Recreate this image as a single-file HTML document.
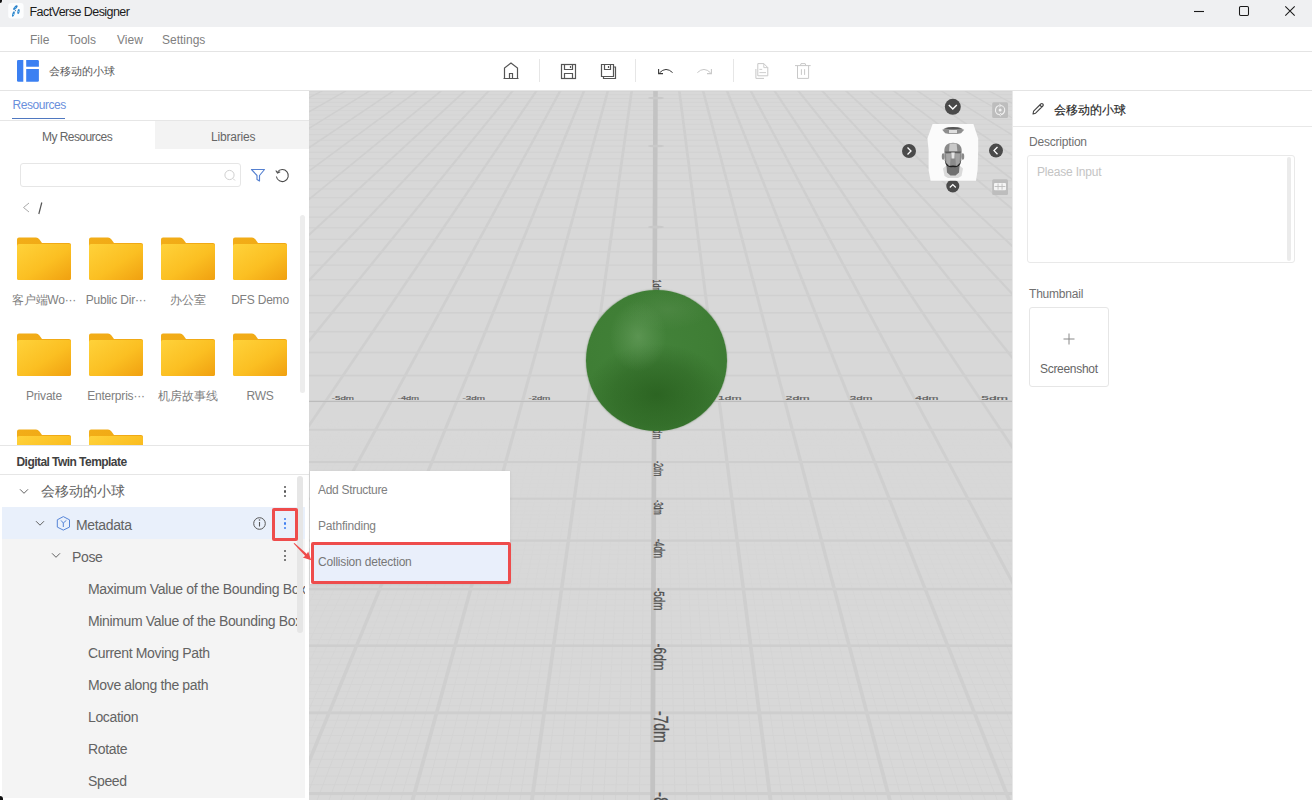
<!DOCTYPE html>
<html><head><meta charset="utf-8">
<style>
*{box-sizing:border-box;margin:0;padding:0}
html,body{width:1312px;height:800px;overflow:hidden;background:#fff;font-family:"Liberation Sans",sans-serif;color:#555}
.a{position:absolute}
.t{position:absolute;white-space:nowrap;line-height:1}
svg{display:block}
#titlebar{left:0;top:0;width:1312px;height:27px;background:#eff0f2}
#menubar{left:0;top:27px;width:1312px;height:25px;background:#fff;border-bottom:1px solid #e4e4e4}
#toolbar{left:0;top:52px;width:1312px;height:39px;background:#fff;border-bottom:1px solid #e4e4e4}

#view{left:309px;top:91px;width:703px;height:709px;background:#d8d8d8;overflow:hidden}
#right{left:1012px;top:91px;width:300px;height:709px;background:#fff;border-left:1px solid #e8e8e8}
.menu{font-size:12px;color:#808080;top:7px}
.sep{position:absolute;top:7px;width:1px;height:23px;background:#e6e6e6}
.folder{position:absolute;width:55px;height:44px}
.flabel{position:absolute;width:72px;text-align:center;font-size:12px;color:#808080;letter-spacing:-0.2px;line-height:1;white-space:nowrap}
.tree{position:absolute;font-size:14px;color:#636363;line-height:1;white-space:nowrap;letter-spacing:-0.35px;margin-top:0.5px}
.kebab{position:absolute;width:3px;height:13px}
.kebab i{position:absolute;left:0;width:2.2px;height:2.2px;border-radius:50%;background:#555}
</style></head><body>

<!-- TITLE BAR -->
<div id="titlebar" class="a">
  <svg class="a" style="left:8px;top:3px" width="16" height="16" viewBox="0 0 16 16">
    <rect x="0.2" y="0" width="15.4" height="15.6" rx="3" fill="#fcfdfe"/>
    <ellipse cx="7.4" cy="4.6" rx="1.3" ry="2.9" fill="#2a7fc8" transform="rotate(45 7.4 4.6)"/><circle cx="7.2" cy="4.8" r="0.7" fill="#6cc4f4"/>
    <ellipse cx="10.5" cy="8.5" rx="1.15" ry="2.5" fill="#2f86cc" transform="rotate(12 10.5 8.5)"/><circle cx="10.5" cy="8.6" r="0.6" fill="#7fd0f8"/>
    <ellipse cx="5.4" cy="11" rx="1.15" ry="2.8" fill="#2f86cc" transform="rotate(18 5.4 11)"/><circle cx="5.5" cy="11.4" r="0.6" fill="#7fd0f8"/>
    <circle cx="7.4" cy="7.6" r="0.6" fill="#3a6a9a"/>
  </svg>
  <div class="a" style="left:0;top:0;width:2px;height:3px;background:#111;border-radius:0 0 2px 0"></div>
  <div class="t" style="left:29.5px;top:6px;font-size:12.5px;color:#1b1b1b;letter-spacing:-0.55px">FactVerse Designer</div>
  <svg class="a" style="left:1190px;top:4px" width="110" height="16" viewBox="0 0 110 16">
    <line x1="4" y1="7.5" x2="14" y2="7.5" stroke="#1a1a1a" stroke-width="1.1"/>
    <rect x="49.5" y="2.5" width="9" height="9" rx="1.2" fill="none" stroke="#1a1a1a" stroke-width="1.05"/>
    <path d="M95.3 2.3 L104.7 11.7 M104.7 2.3 L95.3 11.7" stroke="#1a1a1a" stroke-width="1.05"/>
  </svg>
</div>

<!-- MENU BAR -->
<div id="menubar" class="a">
  <div class="t menu" style="left:30px">File</div>
  <div class="t menu" style="left:68px">Tools</div>
  <div class="t menu" style="left:117px">View</div>
  <div class="t menu" style="left:162px">Settings</div>
</div>

<!-- TOOLBAR -->
<div id="toolbar" class="a">
  <svg class="a" style="left:17px;top:8px" width="22" height="22" viewBox="0 0 22 22">
    <path d="M0 1.3 Q0 0 1.3 0 H6.3 V21.7 H1.3 Q0 21.7 0 20.4 Z" fill="#3b80f2"/>
    <path d="M9.2 0 H20.6 Q21.9 0 21.9 1.3 V6.8 H9.2 Z" fill="#3b80f2"/>
    <path d="M9.2 9 H21.9 V20.4 Q21.9 21.7 20.6 21.7 H9.2 Z" fill="#3b80f2"/>
  </svg>
  <div class="t" style="left:48.5px;top:14px;font-size:11.4px;color:#555">会移动的小球</div>

  <svg class="a" style="left:500px;top:8px" width="320" height="24" viewBox="500 60 320 24">
    <g fill="none" stroke="#555" stroke-width="1.2">
      <!-- home -->
      <path d="M503.5 78.5 H518.5 M504.5 78.5 V68 L511 63 L517.5 68 V78.5 M509.5 78.5 V73.5 H512.5 V78.5"/>
      <!-- save -->
      <rect x="561.5" y="64.5" width="14" height="14"/>
      <path d="M564.5 64.5 V69.5 H572.5 V64.5 M564.5 78.5 V73.5 H572.5 V78.5"/>
      <line x1="570.5" y1="66" x2="570.5" y2="68"/>
      <!-- save all -->
      <path d="M601.5 64.5 H613.5 V76.5 H601.5 Z"/>
      <path d="M613.5 67 H615.5 V78.5 H603.5 V76.5"/>
      <path d="M604.5 64.5 V69.5 H610.5 V64.5"/>
      <line x1="608.5" y1="66" x2="608.5" y2="68"/>
      <!-- undo -->
      <path d="M659.5 72.8 Q666 66.2 672.6 72.6" stroke="#3a3a3a" stroke-width="1"/>
      <path d="M658.6 69 V73.6 H663" stroke="#3a3a3a" stroke-width="1.1"/>
    </g>
    <g fill="none" stroke="#c8c8c8" stroke-width="1.2">
      <!-- redo -->
      <path d="M710.6 72.8 Q704 66.2 697.4 72.6" stroke-width="1"/>
      <path d="M711.4 69 V73.6 H707" stroke-width="1.1"/>
      <!-- copy -->
      <path d="M757.8 63.6 H763.8 L767.8 67.6 V75.8 H757.8 Z" stroke-width="1"/>
      <path d="M763.8 63.6 V67.6 H767.8" stroke-width="0.9"/>
      <path d="M755.9 69 V78.4 H764" stroke-width="1"/>
      <path d="M759.4 69.4 H762.2 M759.4 72.6 H766" stroke-width="0.9"/>
      <!-- delete -->
      <path d="M795 65.6 H810.7 M800.4 65.6 L801 63.6 H805.2 L805.8 65.6 M797.5 65.6 V78.4 H808.6 V65.6 M801.4 69.2 V74.9 M804.6 69.2 V74.9" stroke-width="1"/>
    </g>
  </svg>
  <div class="sep" style="left:539px"></div>
  <div class="sep" style="left:635px"></div>
  <div class="sep" style="left:733px"></div>
</div>

<!-- LEFT PANEL -->
<div id="leftbg" class="a" style="left:0;top:91px;width:309px;height:709px;background:#fff"></div>
<div id="left" class="a" style="left:0;top:0;width:309px;height:800px;overflow:hidden">
  <div class="t" style="left:12.5px;top:99px;font-size:12px;color:#6a8fdc;letter-spacing:-0.45px">Resources</div>
  <div class="a" style="left:12px;top:117.5px;width:53px;height:1.6px;background:#4f78c0"></div>
  <div class="a" style="left:0;top:120px;width:309px;height:1px;background:#e6e6e6"></div>
  <div class="a" style="left:155px;top:121px;width:154px;height:28px;background:#f3f3f3"></div>
  <div class="t" style="left:42px;top:131px;font-size:12px;color:#666;letter-spacing:-0.55px">My Resources</div>
  <div class="t" style="left:211px;top:131px;font-size:12px;color:#666;letter-spacing:-0.2px">Libraries</div>
  <!-- search -->
  <div class="a" style="left:20px;top:163px;width:221px;height:24px;border:1px solid #e6e6e6;border-radius:3px"></div>
  <svg class="a" style="left:222px;top:168px" width="14" height="14" viewBox="0 0 14 14"><circle cx="7.5" cy="7" r="4.6" fill="none" stroke="#d0d0d0" stroke-width="1"/><line x1="11" y1="10.5" x2="13" y2="12.5" stroke="#d0d0d0"/></svg>
  <svg class="a" style="left:250px;top:168px" width="16" height="14" viewBox="0 0 16 14"><path d="M1.5 1.5 H14.5 L9.5 7.5 V13 L7 11.5 V7.5 Z" fill="none" stroke="#5580d0" stroke-width="1.15" stroke-linejoin="round"/></svg>
  <svg class="a" style="left:274px;top:168px" width="16" height="16" viewBox="0 0 16 16"><path d="M3.5 4 A6 6 0 1 1 2.4 8.5" fill="none" stroke="#4a4a4a" stroke-width="1.05"/><path d="M1.8 2.5 L3.5 5 L6.2 3.8" fill="none" stroke="#4a4a4a" stroke-width="1.05"/></svg>
  <!-- breadcrumb -->
  <svg class="a" style="left:22px;top:202px" width="24" height="14" viewBox="0 0 24 14"><path d="M7 1 L1.5 5.5 L7 10" fill="none" stroke="#aaa" stroke-width="1"/><path d="M19.8 0.5 L16.8 12" stroke="#555" stroke-width="1.2"/></svg>

  <svg width="0" height="0" style="position:absolute"><defs>
<linearGradient id="fg" x1="0" y1="0" x2="1" y2="1"><stop offset="0" stop-color="#ffd23a"/><stop offset="0.55" stop-color="#fbbf22"/><stop offset="1" stop-color="#f0a010"/></linearGradient>
<linearGradient id="ft" x1="0" y1="0" x2="1" y2="0"><stop offset="0" stop-color="#f2ad18"/><stop offset="1" stop-color="#f0a814"/></linearGradient>
</defs></svg>
  <svg class="a" style="left:17px;top:237px" width="54" height="44" viewBox="0 0 54 44"><path d="M0 2.5 Q0 0.5 2 0.5 H19 Q21 0.5 22.5 2.5 L25 6 H52 Q54 6 54 8 V41 Q54 43 52 43 H2 Q0 43 0 41 Z" fill="url(#ft)"/><path d="M0 9 Q0 7 2 7 H52 Q54 7 54 9 V41 Q54 43 52 43 H2 Q0 43 0 41 Z" fill="url(#fg)"/></svg>
  <div class="flabel" style="left:8px;top:294px">客户端Wo···</div>
  <svg class="a" style="left:89px;top:237px" width="54" height="44" viewBox="0 0 54 44"><path d="M0 2.5 Q0 0.5 2 0.5 H19 Q21 0.5 22.5 2.5 L25 6 H52 Q54 6 54 8 V41 Q54 43 52 43 H2 Q0 43 0 41 Z" fill="url(#ft)"/><path d="M0 9 Q0 7 2 7 H52 Q54 7 54 9 V41 Q54 43 52 43 H2 Q0 43 0 41 Z" fill="url(#fg)"/></svg>
  <div class="flabel" style="left:80px;top:294px">Public Dir···</div>
  <svg class="a" style="left:161px;top:237px" width="54" height="44" viewBox="0 0 54 44"><path d="M0 2.5 Q0 0.5 2 0.5 H19 Q21 0.5 22.5 2.5 L25 6 H52 Q54 6 54 8 V41 Q54 43 52 43 H2 Q0 43 0 41 Z" fill="url(#ft)"/><path d="M0 9 Q0 7 2 7 H52 Q54 7 54 9 V41 Q54 43 52 43 H2 Q0 43 0 41 Z" fill="url(#fg)"/></svg>
  <div class="flabel" style="left:152px;top:294px">办公室</div>
  <svg class="a" style="left:233px;top:237px" width="54" height="44" viewBox="0 0 54 44"><path d="M0 2.5 Q0 0.5 2 0.5 H19 Q21 0.5 22.5 2.5 L25 6 H52 Q54 6 54 8 V41 Q54 43 52 43 H2 Q0 43 0 41 Z" fill="url(#ft)"/><path d="M0 9 Q0 7 2 7 H52 Q54 7 54 9 V41 Q54 43 52 43 H2 Q0 43 0 41 Z" fill="url(#fg)"/></svg>
  <div class="flabel" style="left:224px;top:294px">DFS Demo</div>
  <svg class="a" style="left:17px;top:333px" width="54" height="44" viewBox="0 0 54 44"><path d="M0 2.5 Q0 0.5 2 0.5 H19 Q21 0.5 22.5 2.5 L25 6 H52 Q54 6 54 8 V41 Q54 43 52 43 H2 Q0 43 0 41 Z" fill="url(#ft)"/><path d="M0 9 Q0 7 2 7 H52 Q54 7 54 9 V41 Q54 43 52 43 H2 Q0 43 0 41 Z" fill="url(#fg)"/></svg>
  <div class="flabel" style="left:8px;top:390px">Private</div>
  <svg class="a" style="left:89px;top:333px" width="54" height="44" viewBox="0 0 54 44"><path d="M0 2.5 Q0 0.5 2 0.5 H19 Q21 0.5 22.5 2.5 L25 6 H52 Q54 6 54 8 V41 Q54 43 52 43 H2 Q0 43 0 41 Z" fill="url(#ft)"/><path d="M0 9 Q0 7 2 7 H52 Q54 7 54 9 V41 Q54 43 52 43 H2 Q0 43 0 41 Z" fill="url(#fg)"/></svg>
  <div class="flabel" style="left:80px;top:390px">Enterpris···</div>
  <svg class="a" style="left:161px;top:333px" width="54" height="44" viewBox="0 0 54 44"><path d="M0 2.5 Q0 0.5 2 0.5 H19 Q21 0.5 22.5 2.5 L25 6 H52 Q54 6 54 8 V41 Q54 43 52 43 H2 Q0 43 0 41 Z" fill="url(#ft)"/><path d="M0 9 Q0 7 2 7 H52 Q54 7 54 9 V41 Q54 43 52 43 H2 Q0 43 0 41 Z" fill="url(#fg)"/></svg>
  <div class="flabel" style="left:152px;top:390px">机房故事线</div>
  <svg class="a" style="left:233px;top:333px" width="54" height="44" viewBox="0 0 54 44"><path d="M0 2.5 Q0 0.5 2 0.5 H19 Q21 0.5 22.5 2.5 L25 6 H52 Q54 6 54 8 V41 Q54 43 52 43 H2 Q0 43 0 41 Z" fill="url(#ft)"/><path d="M0 9 Q0 7 2 7 H52 Q54 7 54 9 V41 Q54 43 52 43 H2 Q0 43 0 41 Z" fill="url(#fg)"/></svg>
  <div class="flabel" style="left:224px;top:390px">RWS</div>
  <div class="a" style="left:0;top:429px;width:300px;height:16px;overflow:hidden"><svg class="a" style="left:17px;top:0px" width="54" height="44" viewBox="0 0 54 44"><path d="M0 2.5 Q0 0.5 2 0.5 H19 Q21 0.5 22.5 2.5 L25 6 H52 Q54 6 54 8 V41 Q54 43 52 43 H2 Q0 43 0 41 Z" fill="url(#ft)"/><path d="M0 9 Q0 7 2 7 H52 Q54 7 54 9 V41 Q54 43 52 43 H2 Q0 43 0 41 Z" fill="url(#fg)"/></svg><svg class="a" style="left:89px;top:0px" width="54" height="44" viewBox="0 0 54 44"><path d="M0 2.5 Q0 0.5 2 0.5 H19 Q21 0.5 22.5 2.5 L25 6 H52 Q54 6 54 8 V41 Q54 43 52 43 H2 Q0 43 0 41 Z" fill="url(#ft)"/><path d="M0 9 Q0 7 2 7 H52 Q54 7 54 9 V41 Q54 43 52 43 H2 Q0 43 0 41 Z" fill="url(#fg)"/></svg></div>

  <!-- scrollbar -->
  <div class="a" style="left:300px;top:215px;width:5px;height:178px;border-radius:3px;background:#ededed"></div>

  <div class="a" style="left:0;top:445px;width:309px;height:1px;background:#e6e6e6"></div>
  <div class="t" style="left:16.5px;top:456px;font-size:12px;font-weight:bold;color:#404040;letter-spacing:-0.55px">Digital Twin Template</div>
  <div class="a" style="left:0;top:474px;width:309px;height:1px;background:#e6e6e6"></div>

  <!-- tree -->
  <div class="a" style="left:2px;top:507px;width:303px;height:32px;background:#e9f0fb"></div>
  <div class="a" style="left:2px;top:539px;width:303px;height:259px;background:#f4f4f4"></div>
  <svg class="a" style="left:0;top:475px" width="309" height="325" viewBox="0 475 309 325">
    <g fill="none" stroke="#606060" stroke-width="1">
      <path d="M20 489.3 L24 493.3 L28 489.3"/>
      <path d="M36 521.2 L40 525.2 L44 521.2"/>
      <path d="M52 553.3 L56 557.3 L60 553.3"/>
    </g>
    <!-- metadata icon hex -->
    <g>
      <path d="M63.3 516.6 L69.5 519.8 V527.1 L63.3 530.1 L57.3 527.1 V519.8 Z" fill="none" stroke="#5484d8" stroke-width="1"/>
      <path d="M61 520.4 L63.3 523 L66.4 520.3 M63.3 523 V527" fill="none" stroke="#5484d8" stroke-width="1"/>
      <circle cx="259.5" cy="523.5" r="5.8" fill="none" stroke="#555" stroke-width="1"/>
      <line x1="259.5" y1="522" x2="259.5" y2="526.5" stroke="#555" stroke-width="1.1"/>
      <circle cx="259.5" cy="520" r="0.8" fill="#555"/>
    </g>
  </svg>
  <div class="tree" style="left:40.5px;top:484.5px;font-size:13.8px;letter-spacing:0">会移动的小球</div>
  <div class="tree" style="left:76px;top:517px">Metadata</div>
  <div class="tree" style="left:72px;top:549px">Pose</div>
  <div class="tree" style="left:88px;top:581px;width:217px;overflow:hidden;padding-bottom:4px">Maximum Value of the Bounding Box</div>
  <div class="tree" style="left:88px;top:613px;width:217px;overflow:hidden;padding-bottom:4px">Minimum Value of the Bounding Box</div>
  <div class="tree" style="left:88px;top:645px">Current Moving Path</div>
  <div class="tree" style="left:88px;top:677px">Move along the path</div>
  <div class="tree" style="left:88px;top:709px">Location</div>
  <div class="tree" style="left:88px;top:741px">Rotate</div>
  <div class="tree" style="left:88px;top:773px">Speed</div>
  <!-- kebabs -->
  <div class="kebab" style="left:283.5px;top:486.2px"><i style="top:0"></i><i style="top:4.25px"></i><i style="top:8.5px"></i></div>
  <div class="kebab" style="left:283.5px;top:518.1px"><i style="top:0;background:#3d7ef0"></i><i style="top:4.35px;background:#3d7ef0"></i><i style="top:8.7px;background:#3d7ef0"></i></div>
  <div class="kebab" style="left:283.5px;top:550.3px"><i style="top:0"></i><i style="top:4.25px"></i><i style="top:8.5px"></i></div>
  <!-- tree scrollbar -->
    <div class="a" style="left:297.2px;top:475.5px;width:5.6px;height:157px;border-radius:3px;background:#e6e6e6"></div>
  <!-- red box -->
  <div class="a" style="left:272.3px;top:507.5px;width:25.4px;height:33px;border:3.2px solid #ee4c4c;border-radius:2px"></div>
</div>

<!-- VIEWPORT -->
<div id="view" class="a">
  <svg width="703" height="709" style="position:absolute;left:0;top:0"><defs><linearGradient id="sgm" x1="0" y1="0" x2="0" y2="1"><stop offset="0" stop-color="#000"/><stop offset="0.45" stop-color="#000"/><stop offset="1" stop-color="#fff"/></linearGradient><mask id="sgmask"><rect width="703" height="709" fill="url(#sgm)"/></mask></defs><g mask="url(#sgmask)" opacity="0.55"><rect x="0" y="329.36" width="703" height="1" fill="#cfcfcf"/><rect x="0" y="332.31" width="703" height="1" fill="#cfcfcf"/><rect x="0" y="335.29" width="703" height="1" fill="#cfcfcf"/><rect x="0" y="341.37" width="703" height="1" fill="#cfcfcf"/><rect x="0" y="344.46" width="703" height="1" fill="#cfcfcf"/><rect x="0" y="347.59" width="703" height="1" fill="#cfcfcf"/><rect x="0" y="350.75" width="703" height="1" fill="#cfcfcf"/><rect x="0" y="353.96" width="703" height="1" fill="#cfcfcf"/><rect x="0" y="357.20" width="703" height="1" fill="#cfcfcf"/><rect x="0" y="360.49" width="703" height="1" fill="#cfcfcf"/><rect x="0" y="363.81" width="703" height="1" fill="#cfcfcf"/><rect x="0" y="367.18" width="703" height="1" fill="#cfcfcf"/><rect x="0" y="374.04" width="703" height="1" fill="#cfcfcf"/><rect x="0" y="377.54" width="703" height="1" fill="#cfcfcf"/><rect x="0" y="381.08" width="703" height="1" fill="#cfcfcf"/><rect x="0" y="384.67" width="703" height="1" fill="#cfcfcf"/><rect x="0" y="388.31" width="703" height="1" fill="#cfcfcf"/><rect x="0" y="391.99" width="703" height="1" fill="#cfcfcf"/><rect x="0" y="395.72" width="703" height="1" fill="#cfcfcf"/><rect x="0" y="399.50" width="703" height="1" fill="#cfcfcf"/><rect x="0" y="403.33" width="703" height="1" fill="#cfcfcf"/><rect x="0" y="411.15" width="703" height="1" fill="#cfcfcf"/><rect x="0" y="415.14" width="703" height="1" fill="#cfcfcf"/><rect x="0" y="419.19" width="703" height="1" fill="#cfcfcf"/><rect x="0" y="423.29" width="703" height="1" fill="#cfcfcf"/><rect x="0" y="427.45" width="703" height="1" fill="#cfcfcf"/><rect x="0" y="431.66" width="703" height="1" fill="#cfcfcf"/><rect x="0" y="435.94" width="703" height="1" fill="#cfcfcf"/><rect x="0" y="440.28" width="703" height="1" fill="#cfcfcf"/><rect x="0" y="444.68" width="703" height="1" fill="#cfcfcf"/><rect x="0" y="453.67" width="703" height="1" fill="#cfcfcf"/><rect x="0" y="458.26" width="703" height="1" fill="#cfcfcf"/><rect x="0" y="462.92" width="703" height="1" fill="#cfcfcf"/><rect x="0" y="467.65" width="703" height="1" fill="#cfcfcf"/><rect x="0" y="472.45" width="703" height="1" fill="#cfcfcf"/><rect x="0" y="477.33" width="703" height="1" fill="#cfcfcf"/><rect x="0" y="482.28" width="703" height="1" fill="#cfcfcf"/><rect x="0" y="487.30" width="703" height="1" fill="#cfcfcf"/><rect x="0" y="492.41" width="703" height="1" fill="#cfcfcf"/><rect x="0" y="502.85" width="703" height="1" fill="#cfcfcf"/><rect x="0" y="508.20" width="703" height="1" fill="#cfcfcf"/><rect x="0" y="513.63" width="703" height="1" fill="#cfcfcf"/><rect x="0" y="519.15" width="703" height="1" fill="#cfcfcf"/><rect x="0" y="524.76" width="703" height="1" fill="#cfcfcf"/><rect x="0" y="530.46" width="703" height="1" fill="#cfcfcf"/><rect x="0" y="536.25" width="703" height="1" fill="#cfcfcf"/><rect x="0" y="542.14" width="703" height="1" fill="#cfcfcf"/><rect x="0" y="548.13" width="703" height="1" fill="#cfcfcf"/><rect x="0" y="560.41" width="703" height="1" fill="#cfcfcf"/><rect x="0" y="566.71" width="703" height="1" fill="#cfcfcf"/><rect x="0" y="573.12" width="703" height="1" fill="#cfcfcf"/><rect x="0" y="579.64" width="703" height="1" fill="#cfcfcf"/><rect x="0" y="586.28" width="703" height="1" fill="#cfcfcf"/><rect x="0" y="593.04" width="703" height="1" fill="#cfcfcf"/><rect x="0" y="599.91" width="703" height="1" fill="#cfcfcf"/><rect x="0" y="606.91" width="703" height="1" fill="#cfcfcf"/><rect x="0" y="614.04" width="703" height="1" fill="#cfcfcf"/><rect x="0" y="628.70" width="703" height="1" fill="#cfcfcf"/><rect x="0" y="636.23" width="703" height="1" fill="#cfcfcf"/><rect x="0" y="643.91" width="703" height="1" fill="#cfcfcf"/><rect x="0" y="651.73" width="703" height="1" fill="#cfcfcf"/><rect x="0" y="659.71" width="703" height="1" fill="#cfcfcf"/><rect x="0" y="667.84" width="703" height="1" fill="#cfcfcf"/><rect x="0" y="676.13" width="703" height="1" fill="#cfcfcf"/><rect x="0" y="684.58" width="703" height="1" fill="#cfcfcf"/><rect x="0" y="693.21" width="703" height="1" fill="#cfcfcf"/><rect x="0" y="711.00" width="703" height="1" fill="#cfcfcf"/><line x1="-9.79" y1="329" x2="-278.16" y2="709" stroke="#cfcfcf" stroke-width="1"/><line x1="-2.98" y1="329" x2="-266.23" y2="709" stroke="#cfcfcf" stroke-width="1"/><line x1="10.65" y1="329" x2="-242.37" y2="709" stroke="#cfcfcf" stroke-width="1"/><line x1="17.46" y1="329" x2="-230.44" y2="709" stroke="#cfcfcf" stroke-width="1"/><line x1="24.28" y1="329" x2="-218.51" y2="709" stroke="#cfcfcf" stroke-width="1"/><line x1="31.09" y1="329" x2="-206.58" y2="709" stroke="#cfcfcf" stroke-width="1"/><line x1="37.90" y1="329" x2="-194.65" y2="709" stroke="#cfcfcf" stroke-width="1"/><line x1="44.72" y1="329" x2="-182.72" y2="709" stroke="#cfcfcf" stroke-width="1"/><line x1="51.53" y1="329" x2="-170.79" y2="709" stroke="#cfcfcf" stroke-width="1"/><line x1="58.34" y1="329" x2="-158.86" y2="709" stroke="#cfcfcf" stroke-width="1"/><line x1="65.16" y1="329" x2="-146.93" y2="709" stroke="#cfcfcf" stroke-width="1"/><line x1="78.78" y1="329" x2="-123.07" y2="709" stroke="#cfcfcf" stroke-width="1"/><line x1="85.60" y1="329" x2="-111.14" y2="709" stroke="#cfcfcf" stroke-width="1"/><line x1="92.41" y1="329" x2="-99.21" y2="709" stroke="#cfcfcf" stroke-width="1"/><line x1="99.22" y1="329" x2="-87.28" y2="709" stroke="#cfcfcf" stroke-width="1"/><line x1="106.04" y1="329" x2="-75.35" y2="709" stroke="#cfcfcf" stroke-width="1"/><line x1="112.85" y1="329" x2="-63.42" y2="709" stroke="#cfcfcf" stroke-width="1"/><line x1="119.66" y1="329" x2="-51.49" y2="709" stroke="#cfcfcf" stroke-width="1"/><line x1="126.48" y1="329" x2="-39.56" y2="709" stroke="#cfcfcf" stroke-width="1"/><line x1="133.29" y1="329" x2="-27.63" y2="709" stroke="#cfcfcf" stroke-width="1"/><line x1="146.92" y1="329" x2="-3.77" y2="709" stroke="#cfcfcf" stroke-width="1"/><line x1="153.73" y1="329" x2="8.16" y2="709" stroke="#cfcfcf" stroke-width="1"/><line x1="160.54" y1="329" x2="20.09" y2="709" stroke="#cfcfcf" stroke-width="1"/><line x1="167.36" y1="329" x2="32.02" y2="709" stroke="#cfcfcf" stroke-width="1"/><line x1="174.17" y1="329" x2="43.95" y2="709" stroke="#cfcfcf" stroke-width="1"/><line x1="180.98" y1="329" x2="55.88" y2="709" stroke="#cfcfcf" stroke-width="1"/><line x1="187.80" y1="329" x2="67.81" y2="709" stroke="#cfcfcf" stroke-width="1"/><line x1="194.61" y1="329" x2="79.74" y2="709" stroke="#cfcfcf" stroke-width="1"/><line x1="201.42" y1="329" x2="91.67" y2="709" stroke="#cfcfcf" stroke-width="1"/><line x1="215.05" y1="329" x2="115.53" y2="709" stroke="#cfcfcf" stroke-width="1"/><line x1="221.86" y1="329" x2="127.46" y2="709" stroke="#cfcfcf" stroke-width="1"/><line x1="228.68" y1="329" x2="139.39" y2="709" stroke="#cfcfcf" stroke-width="1"/><line x1="235.49" y1="329" x2="151.32" y2="709" stroke="#cfcfcf" stroke-width="1"/><line x1="242.30" y1="329" x2="163.25" y2="709" stroke="#cfcfcf" stroke-width="1"/><line x1="249.12" y1="329" x2="175.18" y2="709" stroke="#cfcfcf" stroke-width="1"/><line x1="255.93" y1="329" x2="187.11" y2="709" stroke="#cfcfcf" stroke-width="1"/><line x1="262.74" y1="329" x2="199.04" y2="709" stroke="#cfcfcf" stroke-width="1"/><line x1="269.55" y1="329" x2="210.97" y2="709" stroke="#cfcfcf" stroke-width="1"/><line x1="283.18" y1="329" x2="234.83" y2="709" stroke="#cfcfcf" stroke-width="1"/><line x1="289.99" y1="329" x2="246.76" y2="709" stroke="#cfcfcf" stroke-width="1"/><line x1="296.81" y1="329" x2="258.69" y2="709" stroke="#cfcfcf" stroke-width="1"/><line x1="303.62" y1="329" x2="270.62" y2="709" stroke="#cfcfcf" stroke-width="1"/><line x1="310.43" y1="329" x2="282.55" y2="709" stroke="#cfcfcf" stroke-width="1"/><line x1="317.25" y1="329" x2="294.48" y2="709" stroke="#cfcfcf" stroke-width="1"/><line x1="324.06" y1="329" x2="306.41" y2="709" stroke="#cfcfcf" stroke-width="1"/><line x1="330.87" y1="329" x2="318.34" y2="709" stroke="#cfcfcf" stroke-width="1"/><line x1="337.69" y1="329" x2="330.27" y2="709" stroke="#cfcfcf" stroke-width="1"/><line x1="351.31" y1="329" x2="354.13" y2="709" stroke="#cfcfcf" stroke-width="1"/><line x1="358.13" y1="329" x2="366.06" y2="709" stroke="#cfcfcf" stroke-width="1"/><line x1="364.94" y1="329" x2="377.99" y2="709" stroke="#cfcfcf" stroke-width="1"/><line x1="371.75" y1="329" x2="389.92" y2="709" stroke="#cfcfcf" stroke-width="1"/><line x1="378.57" y1="329" x2="401.85" y2="709" stroke="#cfcfcf" stroke-width="1"/><line x1="385.38" y1="329" x2="413.78" y2="709" stroke="#cfcfcf" stroke-width="1"/><line x1="392.19" y1="329" x2="425.71" y2="709" stroke="#cfcfcf" stroke-width="1"/><line x1="399.01" y1="329" x2="437.64" y2="709" stroke="#cfcfcf" stroke-width="1"/><line x1="405.82" y1="329" x2="449.57" y2="709" stroke="#cfcfcf" stroke-width="1"/><line x1="419.45" y1="329" x2="473.43" y2="709" stroke="#cfcfcf" stroke-width="1"/><line x1="426.26" y1="329" x2="485.36" y2="709" stroke="#cfcfcf" stroke-width="1"/><line x1="433.07" y1="329" x2="497.29" y2="709" stroke="#cfcfcf" stroke-width="1"/><line x1="439.89" y1="329" x2="509.22" y2="709" stroke="#cfcfcf" stroke-width="1"/><line x1="446.70" y1="329" x2="521.15" y2="709" stroke="#cfcfcf" stroke-width="1"/><line x1="453.51" y1="329" x2="533.08" y2="709" stroke="#cfcfcf" stroke-width="1"/><line x1="460.33" y1="329" x2="545.01" y2="709" stroke="#cfcfcf" stroke-width="1"/><line x1="467.14" y1="329" x2="556.94" y2="709" stroke="#cfcfcf" stroke-width="1"/><line x1="473.95" y1="329" x2="568.87" y2="709" stroke="#cfcfcf" stroke-width="1"/><line x1="487.58" y1="329" x2="592.73" y2="709" stroke="#cfcfcf" stroke-width="1"/><line x1="494.39" y1="329" x2="604.66" y2="709" stroke="#cfcfcf" stroke-width="1"/><line x1="501.21" y1="329" x2="616.59" y2="709" stroke="#cfcfcf" stroke-width="1"/><line x1="508.02" y1="329" x2="628.52" y2="709" stroke="#cfcfcf" stroke-width="1"/><line x1="514.83" y1="329" x2="640.45" y2="709" stroke="#cfcfcf" stroke-width="1"/><line x1="521.65" y1="329" x2="652.38" y2="709" stroke="#cfcfcf" stroke-width="1"/><line x1="528.46" y1="329" x2="664.31" y2="709" stroke="#cfcfcf" stroke-width="1"/><line x1="535.27" y1="329" x2="676.24" y2="709" stroke="#cfcfcf" stroke-width="1"/><line x1="542.09" y1="329" x2="688.17" y2="709" stroke="#cfcfcf" stroke-width="1"/><line x1="555.71" y1="329" x2="712.03" y2="709" stroke="#cfcfcf" stroke-width="1"/><line x1="562.53" y1="329" x2="723.96" y2="709" stroke="#cfcfcf" stroke-width="1"/><line x1="569.34" y1="329" x2="735.89" y2="709" stroke="#cfcfcf" stroke-width="1"/><line x1="576.15" y1="329" x2="747.82" y2="709" stroke="#cfcfcf" stroke-width="1"/><line x1="582.97" y1="329" x2="759.75" y2="709" stroke="#cfcfcf" stroke-width="1"/><line x1="589.78" y1="329" x2="771.68" y2="709" stroke="#cfcfcf" stroke-width="1"/><line x1="596.59" y1="329" x2="783.61" y2="709" stroke="#cfcfcf" stroke-width="1"/><line x1="603.41" y1="329" x2="795.54" y2="709" stroke="#cfcfcf" stroke-width="1"/><line x1="610.22" y1="329" x2="807.47" y2="709" stroke="#cfcfcf" stroke-width="1"/><line x1="623.85" y1="329" x2="831.33" y2="709" stroke="#cfcfcf" stroke-width="1"/><line x1="630.66" y1="329" x2="843.26" y2="709" stroke="#cfcfcf" stroke-width="1"/><line x1="637.47" y1="329" x2="855.19" y2="709" stroke="#cfcfcf" stroke-width="1"/><line x1="644.29" y1="329" x2="867.12" y2="709" stroke="#cfcfcf" stroke-width="1"/><line x1="651.10" y1="329" x2="879.05" y2="709" stroke="#cfcfcf" stroke-width="1"/><line x1="657.91" y1="329" x2="890.98" y2="709" stroke="#cfcfcf" stroke-width="1"/><line x1="664.73" y1="329" x2="902.91" y2="709" stroke="#cfcfcf" stroke-width="1"/><line x1="671.54" y1="329" x2="914.84" y2="709" stroke="#cfcfcf" stroke-width="1"/><line x1="678.35" y1="329" x2="926.77" y2="709" stroke="#cfcfcf" stroke-width="1"/><line x1="691.98" y1="329" x2="950.63" y2="709" stroke="#cfcfcf" stroke-width="1"/><line x1="698.79" y1="329" x2="962.56" y2="709" stroke="#cfcfcf" stroke-width="1"/><line x1="705.61" y1="329" x2="974.49" y2="709" stroke="#cfcfcf" stroke-width="1"/><line x1="712.42" y1="329" x2="986.42" y2="709" stroke="#cfcfcf" stroke-width="1"/></g></svg><svg width="703" height="709" style="position:absolute;left:0;top:0"><rect x="0" y="-0.16" width="703" height="0.85" fill="#d3d3d3"/><rect x="0" y="3.38" width="703" height="0.86" fill="#d3d3d3"/><rect x="0" y="7.06" width="703" height="0.87" fill="#d3d3d3"/><rect x="0" y="10.89" width="703" height="0.89" fill="#d3d3d3"/><rect x="0" y="14.90" width="703" height="0.90" fill="#d3d3d3"/><rect x="0" y="19.08" width="703" height="0.91" fill="#d3d3d3"/><rect x="0" y="23.45" width="703" height="0.93" fill="#d3d3d3"/><rect x="0" y="28.03" width="703" height="0.94" fill="#d3d3d3"/><rect x="0" y="32.82" width="703" height="0.96" fill="#d3d3d3"/><rect x="0" y="37.86" width="703" height="0.97" fill="#d3d3d3"/><rect x="0" y="43.14" width="703" height="0.99" fill="#d2d2d2"/><rect x="0" y="48.69" width="703" height="1.01" fill="#d2d2d2"/><rect x="0" y="54.54" width="703" height="1.03" fill="#d2d2d2"/><rect x="0" y="60.71" width="703" height="1.05" fill="#d2d2d2"/><rect x="0" y="67.22" width="703" height="1.07" fill="#d2d2d2"/><rect x="0" y="74.11" width="703" height="1.09" fill="#d2d2d2"/><rect x="0" y="81.40" width="703" height="1.12" fill="#d2d2d2"/><rect x="0" y="89.13" width="703" height="1.14" fill="#d2d2d2"/><rect x="0" y="97.35" width="703" height="1.17" fill="#d2d2d2"/><rect x="0" y="106.11" width="703" height="1.20" fill="#d2d2d2"/><rect x="0" y="115.45" width="703" height="1.23" fill="#d2d2d2"/><rect x="0" y="125.44" width="703" height="1.26" fill="#d1d1d1"/><rect x="0" y="136.15" width="703" height="1.29" fill="#d1d1d1"/><rect x="0" y="147.65" width="703" height="1.33" fill="#d1d1d1"/><rect x="0" y="160.05" width="703" height="1.37" fill="#d1d1d1"/><rect x="0" y="173.44" width="703" height="1.41" fill="#d1d1d1"/><rect x="0" y="187.95" width="703" height="1.46" fill="#d1d1d1"/><rect x="0" y="203.74" width="703" height="1.51" fill="#d0d0d0"/><rect x="0" y="220.97" width="703" height="1.57" fill="#d0d0d0"/><rect x="0" y="239.86" width="703" height="1.63" fill="#d0d0d0"/><rect x="0" y="260.65" width="703" height="1.70" fill="#d0d0d0"/><rect x="0" y="283.65" width="703" height="1.77" fill="#cfcfcf"/><rect x="0" y="309.23" width="703" height="1.86" fill="#cfcfcf"/><rect x="0" y="337.84" width="703" height="1.95" fill="#cfcfcf"/><rect x="0" y="370.06" width="703" height="2.05" fill="#cecece"/><rect x="0" y="406.63" width="703" height="2.17" fill="#cecece"/><rect x="0" y="448.48" width="703" height="2.31" fill="#cecece"/><rect x="0" y="496.85" width="703" height="2.47" fill="#cecece"/><rect x="0" y="553.40" width="703" height="2.65" fill="#cecece"/><rect x="0" y="620.37" width="703" height="2.87" fill="#cecece"/><rect x="0" y="700.95" width="703" height="3.13" fill="#cecece"/><polygon points="11.48,0 14.18,0 -1326.00,709 -1330.00,709" fill="#cfcfcf"/><polygon points="35.32,0 38.02,0 -1206.70,709 -1210.70,709" fill="#cfcfcf"/><polygon points="59.15,0 61.85,0 -1087.40,709 -1091.40,709" fill="#cfcfcf"/><polygon points="82.98,0 85.68,0 -968.10,709 -972.10,709" fill="#cfcfcf"/><polygon points="106.82,0 109.52,0 -848.80,709 -852.80,709" fill="#cfcfcf"/><polygon points="130.65,0 133.35,0 -729.50,709 -733.50,709" fill="#cfcfcf"/><polygon points="154.48,0 157.18,0 -610.20,709 -614.20,709" fill="#cfcfcf"/><polygon points="178.32,0 181.02,0 -490.90,709 -494.90,709" fill="#cfcfcf"/><polygon points="202.15,0 204.85,0 -371.60,709 -375.60,709" fill="#cfcfcf"/><polygon points="225.98,0 228.68,0 -252.30,709 -256.30,709" fill="#cfcfcf"/><polygon points="249.81,0 252.51,0 -133.00,709 -137.00,709" fill="#cfcfcf"/><polygon points="273.65,0 276.35,0 -13.70,709 -17.70,709" fill="#cfcfcf"/><polygon points="297.48,0 300.18,0 105.60,709 101.60,709" fill="#cfcfcf"/><polygon points="321.31,0 324.01,0 224.90,709 220.90,709" fill="#cfcfcf"/><polygon points="368.98,0 371.68,0 463.50,709 459.50,709" fill="#cfcfcf"/><polygon points="392.81,0 395.51,0 582.80,709 578.80,709" fill="#cfcfcf"/><polygon points="416.65,0 419.35,0 702.10,709 698.10,709" fill="#cfcfcf"/><polygon points="440.48,0 443.18,0 821.40,709 817.40,709" fill="#cfcfcf"/><polygon points="464.31,0 467.01,0 940.70,709 936.70,709" fill="#cfcfcf"/><polygon points="488.14,0 490.84,0 1060.00,709 1056.00,709" fill="#cfcfcf"/><polygon points="511.98,0 514.68,0 1179.30,709 1175.30,709" fill="#cfcfcf"/><polygon points="535.81,0 538.51,0 1298.60,709 1294.60,709" fill="#cfcfcf"/><polygon points="559.64,0 562.34,0 1417.90,709 1413.90,709" fill="#cfcfcf"/><polygon points="583.48,0 586.18,0 1537.20,709 1533.20,709" fill="#cfcfcf"/><polygon points="607.31,0 610.01,0 1656.50,709 1652.50,709" fill="#cfcfcf"/><polygon points="631.14,0 633.84,0 1775.80,709 1771.80,709" fill="#cfcfcf"/><polygon points="654.98,0 657.68,0 1895.10,709 1891.10,709" fill="#cfcfcf"/><polygon points="678.81,0 681.51,0 2014.40,709 2010.40,709" fill="#cfcfcf"/><polygon points="702.64,0 705.34,0 2133.69,709 2129.69,709" fill="#cfcfcf"/></svg>
  <!-- vertical axis -->
  <svg class="a" style="left:0;top:0" width="703" height="709"><polygon points="344.2,0 348.8,0 346,709 341.2,709" fill="#c3c3c3"/></svg>
  <!-- horizontal axis -->
  <div class="a" style="left:0;top:309.5px;width:703px;height:1.3px;background:#bcbcbc"></div>
  <svg class="a" style="left:0;top:0" width="703" height="709"><text transform="translate(344.80,370.00) rotate(90) scale(0.514,1)" font-size="13.15" fill="#505050" stroke="#505050" stroke-width="0.35" font-family="Liberation Sans">-2dm</text><text transform="translate(344.80,409.00) rotate(90) scale(0.487,1)" font-size="13.15" fill="#505050" stroke="#505050" stroke-width="0.35" font-family="Liberation Sans">-3dm</text><text transform="translate(344.80,448.00) rotate(90) scale(0.597,1)" font-size="13.97" fill="#505050" stroke="#505050" stroke-width="0.35" font-family="Liberation Sans">-4dm</text><text transform="translate(344.80,497.00) rotate(90) scale(0.655,1)" font-size="15.07" fill="#505050" stroke="#505050" stroke-width="0.35" font-family="Liberation Sans">-5dm</text><text transform="translate(344.80,552.60) rotate(90) scale(0.721,1)" font-size="16.44" fill="#505050" stroke="#505050" stroke-width="0.35" font-family="Liberation Sans">-6dm</text><text transform="translate(344.80,620.00) rotate(90) scale(0.696,1)" font-size="20.00" fill="#505050" stroke="#505050" stroke-width="0.35" font-family="Liberation Sans">-7dm</text><text transform="translate(344.80,701.00) rotate(90) scale(0.726,1)" font-size="20.55" fill="#505050" stroke="#505050" stroke-width="0.35" font-family="Liberation Sans">-8dm</text><text transform="translate(344.30,332.00) rotate(90) scale(0.6,1)" font-size="12" fill="#505050" stroke="#505050" stroke-width="0.3" font-family="Liberation Sans">-1dm</text><text transform="translate(344.30,188.50) rotate(90) scale(0.7,1)" font-size="10" fill="#505050" stroke="#505050" stroke-width="0.3" font-family="Liberation Sans">1dm</text><ellipse cx="347" cy="7" rx="8" ry="1.3" fill="#c9c9c9"/><ellipse cx="347" cy="55" rx="8" ry="1.3" fill="#c9c9c9"/><ellipse cx="347" cy="136" rx="8" ry="1.5" fill="#c9c9c9"/><text transform="translate(22.70,309.20) scale(0.979,0.5)" font-size="10" fill="#606060" stroke="#606060" stroke-width="0.3" font-family="Liberation Sans">-5dm</text><text transform="translate(88.80,309.20) scale(0.931,0.5)" font-size="10" fill="#606060" stroke="#606060" stroke-width="0.3" font-family="Liberation Sans">-4dm</text><text transform="translate(153.40,309.20) scale(0.992,0.5)" font-size="10" fill="#606060" stroke="#606060" stroke-width="0.3" font-family="Liberation Sans">-3dm</text><text transform="translate(219.50,309.20) scale(0.957,0.5)" font-size="10" fill="#606060" stroke="#606060" stroke-width="0.3" font-family="Liberation Sans">-2dm</text><text transform="translate(409.00,309.20) scale(1.208,0.5)" font-size="10" fill="#606060" stroke="#606060" stroke-width="0.3" font-family="Liberation Sans">1dm</text><text transform="translate(476.50,309.20) scale(1.239,0.5)" font-size="10" fill="#606060" stroke="#606060" stroke-width="0.3" font-family="Liberation Sans">2dm</text><text transform="translate(540.80,309.20) scale(1.162,0.5)" font-size="10" fill="#606060" stroke="#606060" stroke-width="0.3" font-family="Liberation Sans">3dm</text><text transform="translate(606.30,309.20) scale(1.188,0.5)" font-size="10" fill="#606060" stroke="#606060" stroke-width="0.3" font-family="Liberation Sans">4dm</text><text transform="translate(672.30,309.20) scale(1.373,0.5)" font-size="10" fill="#606060" stroke="#606060" stroke-width="0.3" font-family="Liberation Sans">5dm</text></svg>
  <!-- sphere -->
  <div class="a" style="left:277px;top:199px;width:141px;height:141px;border-radius:50%;background:
    radial-gradient(ellipse 20% 25% at 37% 33%, rgba(125,175,115,0.42) 0%, rgba(125,175,115,0.18) 55%, rgba(125,175,115,0) 100%),
    radial-gradient(ellipse 30% 14% at 58% 14%, rgba(100,150,90,0.30) 0%, rgba(100,150,90,0) 100%),
    radial-gradient(ellipse 50% 36% at 50% 74%, rgba(32,84,22,0.62) 0%, rgba(32,84,22,0.32) 60%, rgba(32,84,22,0) 100%),
    radial-gradient(circle at 45% 42%, #43823a 0%, #3f7e35 55%, #3b7832 85%, #3c7633 100%);
    box-shadow:0 0 1.5px 0.2px rgba(60,100,50,0.6)"></div>
  <!-- nav cube -->
  <svg class="a" style="left:590px;top:0" width="113" height="110" viewBox="899 91 113 110">
    <circle cx="952.8" cy="106.8" r="8" fill="#4a4a4a"/>
    <path d="M948.8 105 L952.8 109 L956.8 105" fill="none" stroke="#fff" stroke-width="1.4"/>
    <circle cx="909" cy="151" r="7" fill="#4a4a4a"/>
    <path d="M907.5 147.5 L911 151 L907.5 154.5" fill="none" stroke="#fff" stroke-width="1.3"/>
    <circle cx="996" cy="150.6" r="7" fill="#4a4a4a"/>
    <path d="M997.5 147 L994 150.6 L997.5 154.2" fill="none" stroke="#fff" stroke-width="1.3"/>
    <circle cx="952.8" cy="186" r="6.5" fill="#4a4a4a"/>
    <path d="M949.8 187.5 L952.8 184.5 L955.8 187.5" fill="none" stroke="#fff" stroke-width="1.2"/>
    <path d="M932.6 124 H973.4 L978.2 138.4 V150 L977.6 170 L976 180.8 H930.6 L928.6 170 V150 L927.4 138.4 Z" fill="#fbfbfb"/>
    <path d="M942.2 129.8 Q953 125.2 964.2 129.8 L961 133.2 Q953 135 945.2 133.2 Z" fill="#8e8e8e"/>
    <path d="M943.5 128.4 Q953 125.8 962.8 128.4 Q953 130 943.5 128.4 Z" fill="#555"/>
    <rect x="949" y="130" width="8" height="3.2" fill="#dedede"/>
    <!-- neck -->
    <path d="M943 168.5 L947 165 H959 L963 168.5 L961.5 176 L958 178 H948 L944.5 176 Z" fill="#dadada"/>
    <!-- ears -->
    <ellipse cx="943.2" cy="156.5" rx="1.4" ry="3.3" fill="#8a8a8a"/>
    <ellipse cx="962.8" cy="156.5" rx="1.4" ry="3.3" fill="#8a8a8a"/>
    <!-- skull/face -->
    <path d="M953 142.8 C947.5 142.8 944.3 145.5 944.3 151 L944.5 158 C945 163 946.5 167 948.5 169.5 L951 171 H955 L957.5 169.5 C959.5 167 961 163 961.5 158 L961.7 151 C961.7 145.5 958.5 142.8 953 142.8 Z" fill="#8a8a8a"/>
    <path d="M949.6 143.6 H956.6 L957.4 151.6 H949 Z" fill="#c9c9c9"/>
    <path d="M945 151.5 H961 L960.5 153 H945.5 Z" fill="#5e5e5e"/>
    <path d="M951.3 152.5 H954.7 L954.4 158.5 H951.6 Z" fill="#e6e6e6"/>
    <path d="M946 154 L951 153.5 L950 166 L946.5 163 Z" fill="#a8a8a8"/>
    <path d="M955 153.5 L960 154 L959.5 163 L956 166 Z" fill="#a2a2a2"/>
    <path d="M944.5 159 C945.5 164 946.5 166.5 950 168 Q953 166.5 956 168 C959.5 166.5 960.5 164 961.5 159 L960 163 L957 166 L953 165.5 L949 166 L946 163 Z" fill="#1e1e1e"/>
    <path d="M946.5 166 L953 168 L959.5 166 L959 172.5 L955.5 175.5 H950.5 L947 172.5 Z" fill="#707070"/>
    <rect x="992.2" y="102.2" width="15.8" height="15.8" rx="1.5" fill="#bdbdbd"/>
    <circle cx="1000.1" cy="110.1" r="4.6" fill="none" stroke="#f2f2f2" stroke-width="1.1" stroke-dasharray="12.4 2.05" transform="rotate(-80 1000.1 110.1)"/>
    <path d="M999.3 104 L1001 105.5 L999.3 107 M1000.9 113.2 L999.2 114.7 L1000.9 116.2" fill="none" stroke="#f2f2f2" stroke-width="1"/>
    <circle cx="1000.1" cy="110.1" r="1.5" fill="#f2f2f2"/>
    <rect x="992.2" y="179.2" width="15.8" height="15.8" rx="1.5" fill="#bdbdbd"/>
    <rect x="994" y="182.9" width="12" height="7.3" rx="1" fill="#f4f4f4"/>
    <g fill="#bdbdbd"><rect x="997.6" y="183.5" width="0.9" height="6.1"/><rect x="1001.6" y="183.5" width="0.9" height="6.1"/><rect x="994.6" y="186.1" width="10.8" height="0.9"/></g>
  </svg>
  
</div>

<!-- CONTEXT MENU -->
<div class="a" style="left:310px;top:471px;width:200px;height:113px;background:#fff;box-shadow:0 1px 3px rgba(0,0,0,0.08)"></div>
<div class="t" style="left:318px;top:484px;font-size:12px;color:#808080;letter-spacing:-0.3px">Add Structure</div>
<div class="t" style="left:318px;top:520px;font-size:12px;color:#808080;letter-spacing:-0.2px">Pathfinding</div>
<div class="a" style="left:311px;top:542px;width:200px;height:42px;background:#e9effb;border:3.8px solid #ee4c4c;border-radius:2px"></div>
<div class="t" style="left:318px;top:556px;font-size:12px;color:#777;letter-spacing:-0.2px">Collision detection</div>
<!-- red arrow -->
<svg class="a" style="left:290px;top:536px" width="30" height="30" viewBox="290 536 30 30">
  <path d="M293.6 543.6 L294.4 542.9 L308.6 555.4 L306.6 557.4 Z" fill="#ef4b4b"/>
  <path d="M311.2 560.2 L302.8 557.4 L306 555.6 L308.2 551.6 Z" fill="#ef4b4b"/>
</svg>

<!-- RIGHT PANEL -->
<div id="right" class="a"></div>
<div class="a" style="left:1013px;top:126px;width:299px;height:1px;background:#e8e8e8"></div>
<svg class="a" style="left:1031px;top:102px" width="14" height="14" viewBox="0 0 14 14">
  <path d="M2 12 L2.6 9.2 L9.8 2 Q10.8 1 11.8 2 Q12.8 3 11.8 4 L4.6 11.2 Z M8.8 3 L10.8 5" fill="none" stroke="#444" stroke-width="1.1" stroke-linejoin="round"/>
</svg>
<div class="t" style="left:1053.5px;top:104px;font-size:11.6px;color:#262626;-webkit-text-stroke:0.15px #262626">会移动的小球</div>
<div class="t" style="left:1029px;top:136px;font-size:12px;color:#707070;letter-spacing:-0.2px">Description</div>
<div class="a" style="left:1027px;top:155px;width:268px;height:108px;border:1px solid #e9e9e9;border-radius:3px"></div>
<div class="a" style="left:1287.3px;top:157px;width:3.7px;height:104px;border-radius:2px;background:#ebebeb"></div>
<div class="t" style="left:1037px;top:166px;font-size:12px;color:#c4c4c4;letter-spacing:-0.2px">Please Input</div>
<div class="t" style="left:1029px;top:288px;font-size:12px;color:#707070;letter-spacing:-0.2px">Thumbnail</div>
<div class="a" style="left:1029px;top:307px;width:80px;height:80px;border:1px solid #e6e6e6;border-radius:3px"></div>
<svg class="a" style="left:1063px;top:333px" width="12" height="12" viewBox="0 0 12 12"><path d="M6 0.5 V11.5 M0.5 6 H11.5" stroke="#888" stroke-width="1"/></svg>
<div class="t" style="left:1040px;top:363px;font-size:12px;color:#666;letter-spacing:-0.3px">Screenshot</div>


<div class="a" style="left:0;top:796px;width:3px;height:4px;background:#111;border-radius:0 3px 0 0"></div>
</body></html>
